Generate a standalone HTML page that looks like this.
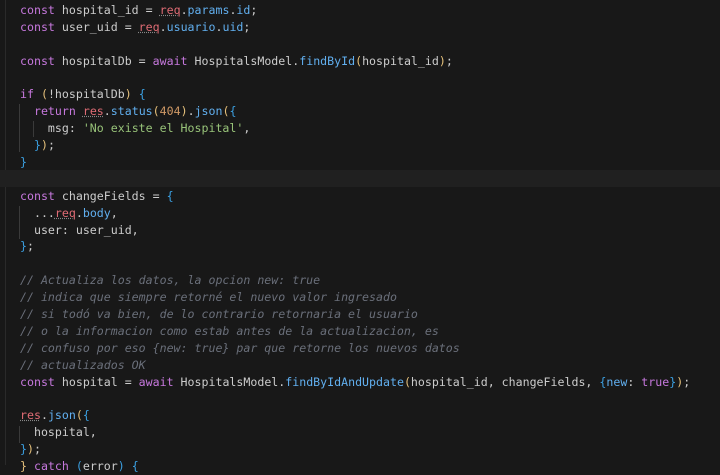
<!DOCTYPE html>
<html><head><meta charset="utf-8"><style>
html,body{margin:0;padding:0;background:#181818;width:720px;height:465px;overflow:hidden}
.g{position:absolute;left:5px;top:0;width:1px;height:465px;background:#2a2a2a}
.code{position:absolute;left:20px;top:2px;font-family:"DejaVu Sans Mono","Liberation Mono",monospace;font-size:11.6px;line-height:16.9px;color:#cccccc}
.l{height:16.9px;position:relative;white-space:pre}
.hl{position:absolute;left:0;top:170px;width:720px;height:17px;background:#202020}
.k{color:#c678dd}.r{color:#e06c75;text-decoration:underline dotted #888}.p{color:#61afef}.f{color:#61afef}
.s{color:#98c379}.n{color:#d19a66}.b{color:#3b9fe0}.y{color:#e5c07b}.c{color:#6a6f7a;font-style:italic}.t{color:#c678dd}
.ig{position:absolute;width:1px;background:#3a3a3a}
</style></head><body>
<div class="g"></div>
<div class="hl"></div>
<div class="ig" style="left:19px;top:104px;height:48px"></div>
<div class="ig" style="left:33px;top:121px;height:16px"></div>
<div class="ig" style="left:19px;top:206px;height:33px"></div>
<div class="ig" style="left:19px;top:426px;height:17px"></div>
<div class="code"><div class="l"><span class="k">const</span> hospital_id = <span class="r">req</span>.<span class="p">params</span>.<span class="p">id</span>;</div><div class="l"><span class="k">const</span> user_uid = <span class="r">req</span>.<span class="p">usuario</span>.<span class="p">uid</span>;</div><div class="l"> </div><div class="l"><span class="k">const</span> hospitalDb = <span class="k">await</span> HospitalsModel.<span class="f">findById</span><span class="y">(</span>hospital_id<span class="y">)</span>;</div><div class="l"> </div><div class="l"><span class="k">if</span> <span class="y">(</span>!hospitalDb<span class="y">)</span> <span class="b">{</span></div><div class="l">  <span class="k">return</span> <span class="r">res</span>.<span class="f">status</span><span class="y">(</span><span class="n">404</span><span class="y">)</span>.<span class="f">json</span><span class="y">(</span><span class="b">{</span></div><div class="l">    msg: <span class="s">'No existe el Hospital'</span>,</div><div class="l">  <span class="b">}</span><span class="y">)</span>;</div><div class="l"><span class="b">}</span></div><div class="l"> </div><div class="l"><span class="k">const</span> changeFields = <span class="b">{</span></div><div class="l">  ...<span class="r">req</span>.<span class="p">body</span>,</div><div class="l">  user: user_uid,</div><div class="l"><span class="b">}</span>;</div><div class="l"> </div><div class="l c">// Actualiza los datos, la opcion new: true</div><div class="l c">// indica que siempre retorné el nuevo valor ingresado</div><div class="l c">// si todó va bien, de lo contrario retornaria el usuario</div><div class="l c">// o la informacion como estab antes de la actualizacion, es</div><div class="l c">// confuso por eso {new: true} par que retorne los nuevos datos</div><div class="l c">// actualizados OK</div><div class="l"><span class="k">const</span> hospital = <span class="k">await</span> HospitalsModel.<span class="f">findByIdAndUpdate</span><span class="y">(</span>hospital_id, changeFields, <span class="b">{</span><span class="p">new</span>: <span class="t">true</span><span class="b">}</span><span class="y">)</span>;</div><div class="l"> </div><div class="l"><span class="r">res</span>.<span class="f">json</span><span class="y">(</span><span class="b">{</span></div><div class="l">  hospital,</div><div class="l"><span class="b">}</span><span class="y">)</span>;</div><div class="l"><span class="y">}</span> <span class="k">catch</span> <span class="b">(</span>error<span class="b">)</span> <span class="b">{</span></div></div>
</body></html>
